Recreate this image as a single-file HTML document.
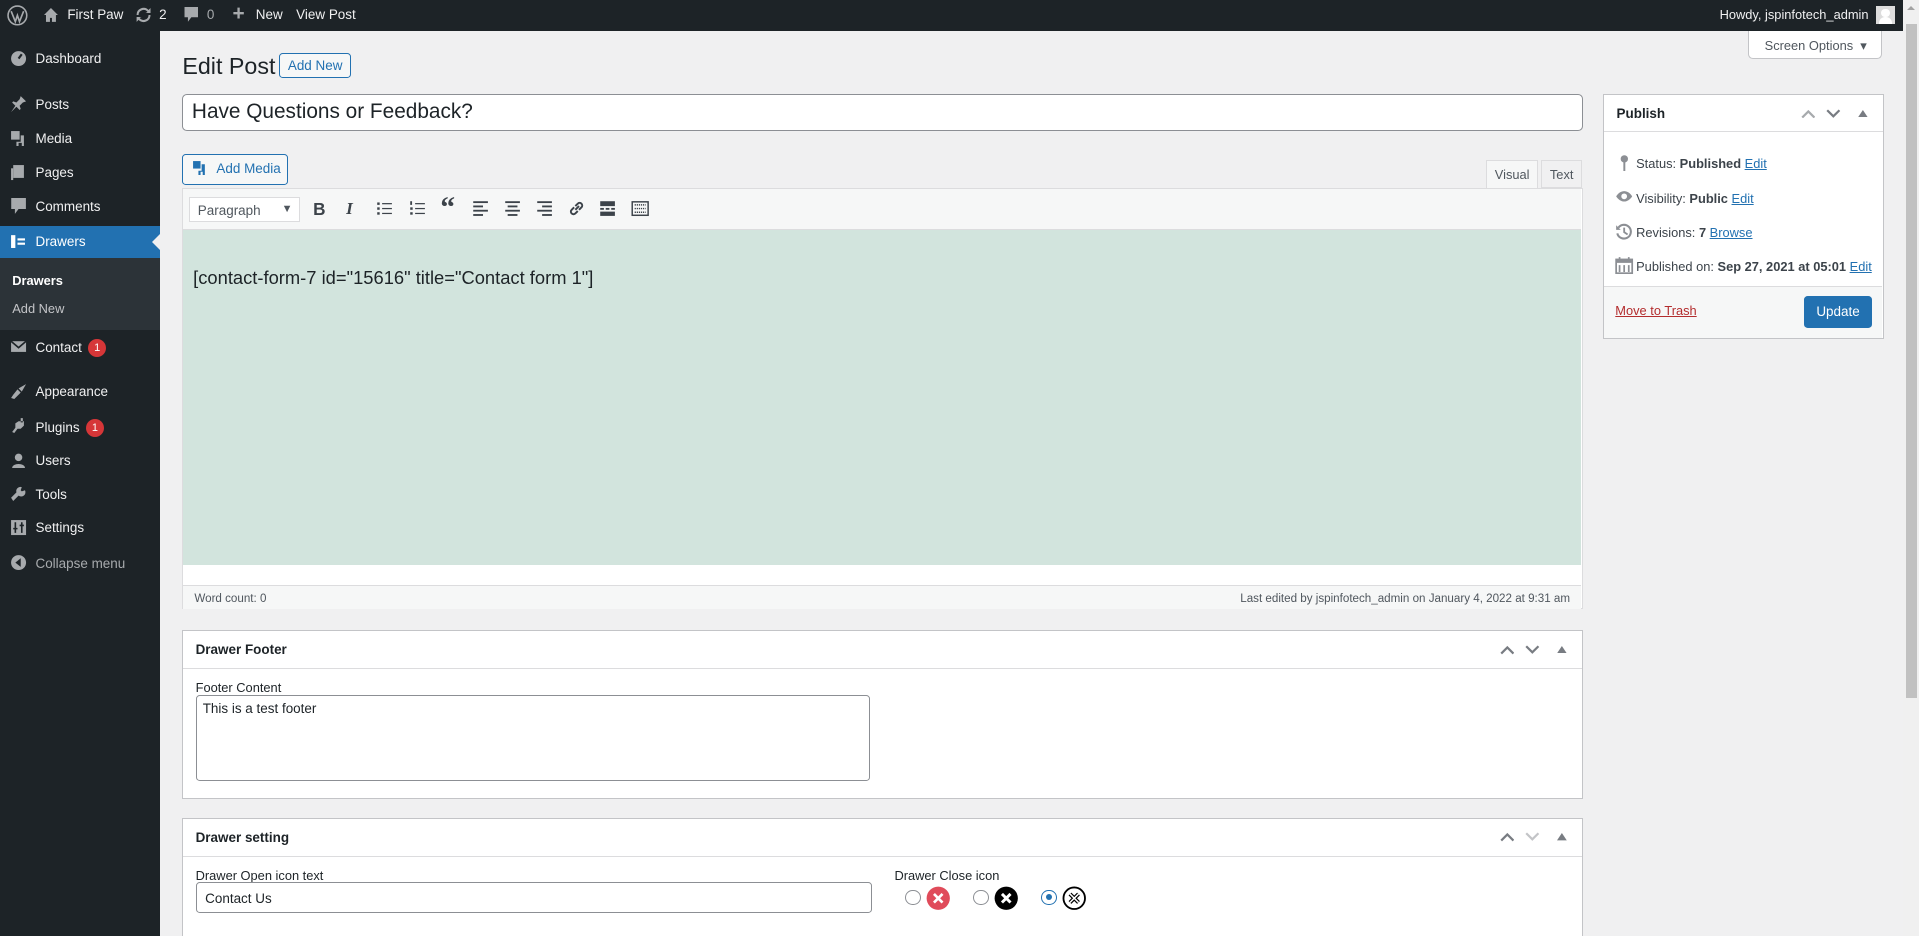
<!DOCTYPE html>
<html><head><meta charset="utf-8">
<style>
html{zoom:1.2239;background:#f0f0f1;overflow:hidden}
*{box-sizing:border-box;margin:0;padding:0}
body{width:1568px;height:765px;overflow:hidden;background:#f0f0f1;font-family:"Liberation Sans",sans-serif;font-size:11px;color:#1d2327;position:relative}
.abs{position:absolute}
#bar{left:0;top:0;width:1555px;height:25px;background:#1d2327;color:#f0f0f1;font-size:11px}
#bar span{position:absolute;top:6px}
#side{left:0;top:25px;width:131px;height:740px;background:#1d2327}
.mi{position:absolute;left:0;width:131px;height:26px;color:#f0f0f1;font-size:11px}
.mi .t{position:absolute;left:29px;top:6px}
.mi svg{position:absolute;left:8px;top:5px}
.badge{display:inline-block;background:#d63638;color:#fff;border-radius:8px;width:15px;height:15px;text-align:center;font-size:9px;line-height:15px;margin-left:5px;vertical-align:1px}
.box{position:absolute;background:#fff;border:1px solid #c3c4c7}
.hd{position:absolute;left:0;right:0;top:0;height:31px;border-bottom:1px solid #dcdcde;font-weight:bold;font-size:11px;padding:9px 10px}
.hd svg{position:absolute;top:11px}
a{color:#2271b1;text-decoration:underline}
.tb svg{position:absolute;top:9px}
</style></head><body>
<div id="bar" class="abs">
<svg class="abs" style="left:6px;top:4px" width="17" height="17" viewBox="0 0 20 20"><circle cx="10" cy="10" r="9" fill="none" stroke="#a7aaad" stroke-width="1.5"/><path d="M4 6l4 10 2-6 2 6 4-10" fill="none" stroke="#a7aaad" stroke-width="1.6"/></svg>
<svg class="abs" style="left:35px;top:6px" width="13" height="13" viewBox="0 0 16 16"><path d="M8 1L1 8h2v7h4v-4h2v4h4V8h2z" fill="#a7aaad"/></svg>
<span style="left:55px">First Paw</span>
<svg class="abs" style="left:110px;top:6px" width="14" height="13" viewBox="0 0 16 16"><path d="M3 8a5 5 0 0 1 9-3l-2 1h5V1l-2 2A7 7 0 0 0 1 8zM13 8a5 5 0 0 1-9 3l2-1H1v5l2-2a7 7 0 0 0 12-5z" fill="#a7aaad"/></svg>
<span style="left:130px">2</span>
<svg class="abs" style="left:150px;top:6px" width="12" height="13" viewBox="0 0 12 14"><path d="M0 0h12v9H6l-3 4V9H0z" fill="#a7aaad"/></svg>
<span style="left:169px;color:#a7aaad">0</span>
<span style="left:190px;top:2px;font-size:17px;font-weight:bold;color:#a7aaad">+</span>
<span style="left:209px">New</span>
<span style="left:242px">View Post</span>
<span style="left:1405px;font-size:10.5px">Howdy, jspinfotech_admin</span>
<div class="abs" style="left:1533px;top:5px;width:15px;height:15px;background:#ddd;overflow:hidden"><div class="abs" style="left:4px;top:2px;width:7px;height:7px;border-radius:50%;background:#fff"></div><div class="abs" style="left:2px;top:9px;width:11px;height:6px;border-radius:5px 5px 0 0;background:#fff"></div></div>
</div>
<div class="abs" style="left:1555px;top:0;width:13px;height:765px;background:#f0f0f0"><div class="abs" style="left:2px;top:20px;width:9px;height:550px;background:#c1c1c1"></div><div class="abs" style="left:3px;top:5px;border:3.5px solid transparent;border-bottom:4px solid #a3a3a3;border-top:0"></div></div>
<div id="side" class="abs">
<div class="mi" style="top:11px"><svg width="14" height="14" viewBox="0 0 16 16"><circle cx="8" cy="8" r="7" fill="#a7aaad"/><path d="M8 8l3-4" stroke="#1d2327" stroke-width="2"/></svg><span class="t">Dashboard</span></div>
<div class="mi" style="top:48px"><svg width="14" height="14" viewBox="0 0 16 16"><path d="M10 1l5 5-3 1-3 3 1 3-1 1-3-3-5 5 4-6-3-3 1-1 3 1 3-3z" fill="#a7aaad"/></svg><span class="t">Posts</span></div>
<div class="mi" style="top:76px"><svg width="14" height="14" viewBox="0 0 16 16"><rect x="1" y="1" width="8" height="8" fill="#a7aaad"/><path d="M10 5h3v10h-2v-3h-3v3H6v-4h4z" fill="#a7aaad"/></svg><span class="t">Media</span></div>
<div class="mi" style="top:104px"><svg width="14" height="14" viewBox="0 0 16 16"><rect x="3" y="1" width="10" height="12" fill="#a7aaad"/><rect x="1" y="4" width="2" height="11" fill="#a7aaad"/></svg><span class="t">Pages</span></div>
<div class="mi" style="top:132px"><svg width="14" height="14" viewBox="0 0 12 14"><path d="M0 0h12v9H6l-3 4V9H0z" fill="#a7aaad"/></svg><span class="t">Comments</span></div>
<div class="mi" style="top:160px;background:#2271b1;color:#fff"><svg width="14" height="14" viewBox="0 0 16 16"><rect x="1" y="2" width="4" height="12" fill="#fff"/><rect x="7" y="5" width="7" height="2" fill="#fff"/><rect x="7" y="9" width="7" height="2" fill="#fff"/></svg><span class="t">Drawers</span><div class="abs" style="right:0;top:6px;border:7px solid transparent;border-right:7px solid #f0f0f1;border-left:0"></div></div>
<div class="abs" style="left:0;top:186px;width:131px;height:59px;background:#2c3338"></div>
<div class="abs" style="left:10px;top:198px;color:#fff;font-weight:bold;font-size:10.5px">Drawers</div>
<div class="abs" style="left:10px;top:221px;color:#c3c4c7;font-size:10.5px">Add New</div>
<div class="mi" style="top:246px"><svg width="14" height="14" viewBox="0 0 16 16"><rect x="1" y="3" width="14" height="10" fill="#a7aaad"/><path d="M1 3l7 6 7-6" fill="none" stroke="#1d2327" stroke-width="1.5"/></svg><span class="t">Contact<span class="badge">1</span></span></div>
<div class="mi" style="top:283px"><svg width="14" height="14" viewBox="0 0 16 16"><path d="M15 1l-7 4 3 3zM7 6l3 3-4 4-2 2-3-1 2-3z" fill="#a7aaad"/></svg><span class="t">Appearance</span></div>
<div class="mi" style="top:311px"><svg width="14" height="14" viewBox="0 0 16 16"><path d="M10 1v4h2V1zM13 4v4l-3 3H7l-3 4-2-1 3-4V6l3-2z" fill="#a7aaad"/></svg><span class="t">Plugins<span class="badge">1</span></span></div>
<div class="mi" style="top:339px"><svg width="14" height="14" viewBox="0 0 16 16"><circle cx="8" cy="5" r="3.5" fill="#a7aaad"/><path d="M2 15c0-5 12-5 12 0z" fill="#a7aaad"/></svg><span class="t">Users</span></div>
<div class="mi" style="top:367px"><svg width="14" height="14" viewBox="0 0 16 16"><path d="M14 4l-3 1-1-1 1-3a4 4 0 0 0-5 5L1 11l2 3 5-5a4 4 0 0 0 6-5z" fill="#a7aaad"/></svg><span class="t">Tools</span></div>
<div class="mi" style="top:394px"><svg width="14" height="14" viewBox="0 0 16 16"><rect x="1" y="1" width="14" height="14" fill="#a7aaad"/><path d="M5 3v10M11 3v10M3 9h4M9 6h4" stroke="#1d2327" stroke-width="1.5"/></svg><span class="t">Settings</span></div>
<div class="mi" style="top:423px;color:#a7aaad"><svg width="14" height="14" viewBox="0 0 16 16"><circle cx="8" cy="8" r="7" fill="#a7aaad"/><path d="M10 4L5 8l5 4z" fill="#1d2327"/></svg><span class="t">Collapse menu</span></div>
</div>

<div class="abs" style="left:149px;top:43px;font-size:19px">Edit Post</div>
<div class="abs" style="left:228px;top:43px;width:59px;height:21px;border:1px solid #2271b1;border-radius:3px;color:#2271b1;font-size:11px;text-align:center;line-height:19px;background:#f6f7f7">Add New</div>
<div class="abs" style="left:1428px;top:25px;width:110px;height:23px;background:#fff;border:1px solid #c3c4c7;border-top:0;border-radius:0 0 4px 4px;color:#50575e;font-size:10.5px;padding:6px 0 0 13px">Screen Options &nbsp;▾</div>

<div class="abs" style="left:149px;top:77px;width:1144px;height:30px;background:#fff;border:1px solid #8c8f94;border-radius:4px;font-size:17px;padding:4px 7px">Have Questions or Feedback?</div>

<div class="abs" style="left:149px;top:126px;width:86px;height:25px;border:1px solid #2271b1;border-radius:3px;color:#2271b1;background:#f6f7f7;font-size:11px;padding:5px 0 0 27px"><svg class="abs" style="left:7px;top:4px" width="14" height="14" viewBox="0 0 16 16"><rect x="1" y="1" width="7" height="7" fill="#2271b1"/><path d="M9 4h3v10h-2v-3H8v3H6v-4h3z" fill="#2271b1"/></svg>Add Media</div>
<div class="abs" style="left:1214px;top:131px;width:43px;height:24px;background:#f6f7f7;border:1px solid #dcdcde;border-bottom:0;font-size:10.5px;color:#50575e;text-align:center;padding-top:5px">Visual</div>
<div class="abs" style="left:1259px;top:131px;width:34px;height:23px;background:#f0f0f1;border:1px solid #dcdcde;font-size:10.5px;color:#50575e;text-align:center;padding-top:5px">Text</div>

<div class="abs" style="left:149px;top:154px;width:1144px;height:344px;border:1px solid #dcdcde;background:#fff">
 <div class="abs tb" style="left:0;top:0;width:1142px;height:33px;background:#f6f7f7;border-bottom:1px solid #dcdcde">
  <div class="abs" style="left:5px;top:6px;width:90px;height:21px;background:#fff;border:1px solid #dcdcde;color:#50575e;font-size:11px;padding:4px 6px">Paragraph<span class="abs" style="right:5px;top:4px;font-size:9px">▼</span></div>
  <span class="abs" style="left:106px;top:8px;font-size:14px;font-weight:bold;color:#3c434a">B</span>
  <span class="abs" style="left:133px;top:8px;font-size:14px;font-style:italic;font-weight:bold;font-family:'Liberation Serif',serif;color:#3c434a">I</span>
  <svg style="left:157px" width="14" height="14" viewBox="0 0 14 14" fill="#3c434a"><rect x="1" y="2" width="2" height="2"/><rect x="1" y="6" width="2" height="2"/><rect x="1" y="10" width="2" height="2"/><rect x="5" y="2.5" width="8" height="1"/><rect x="5" y="6.5" width="8" height="1"/><rect x="5" y="10.5" width="8" height="1"/></svg>
  <svg style="left:184px" width="14" height="14" viewBox="0 0 14 14" fill="#3c434a"><rect x="1" y="1" width="1.5" height="3"/><rect x="1" y="6" width="2" height="2"/><rect x="1" y="10" width="2" height="2"/><rect x="5" y="2.5" width="8" height="1"/><rect x="5" y="6.5" width="8" height="1"/><rect x="5" y="10.5" width="8" height="1"/></svg>
  <span class="abs" style="left:210px;top:2px;font-size:24px;font-weight:bold;color:#3c434a;font-family:'Liberation Serif',serif">“</span>
  <svg style="left:236px" width="14" height="14" viewBox="0 0 14 14" fill="#3c434a"><rect x="1" y="1" width="12" height="1.5"/><rect x="1" y="4.5" width="8" height="1.5"/><rect x="1" y="8" width="12" height="1.5"/><rect x="1" y="11.5" width="8" height="1.5"/></svg>
  <svg style="left:262px" width="14" height="14" viewBox="0 0 14 14" fill="#3c434a"><rect x="1" y="1" width="12" height="1.5"/><rect x="3" y="4.5" width="8" height="1.5"/><rect x="1" y="8" width="12" height="1.5"/><rect x="3" y="11.5" width="8" height="1.5"/></svg>
  <svg style="left:288px" width="14" height="14" viewBox="0 0 14 14" fill="#3c434a"><rect x="1" y="1" width="12" height="1.5"/><rect x="5" y="4.5" width="8" height="1.5"/><rect x="1" y="8" width="12" height="1.5"/><rect x="5" y="11.5" width="8" height="1.5"/></svg>
  <svg style="left:314px" width="14" height="14" viewBox="0 0 14 14"><path d="M6 8l3-3M5 6l-2 2a2 2 0 0 0 3 3l2-2M9 8l2-2a2 2 0 0 0-3-3L6 5" fill="none" stroke="#3c434a" stroke-width="1.6"/></svg>
  <svg style="left:340px" width="14" height="14" viewBox="0 0 14 14" fill="#3c434a"><rect x="1" y="1" width="12" height="4"/><rect x="1" y="6.5" width="3" height="1.5"/><rect x="5.5" y="6.5" width="3" height="1.5"/><rect x="10" y="6.5" width="3" height="1.5"/><rect x="1" y="9.5" width="12" height="3.5"/></svg>
  <svg style="left:366px" width="15" height="14" viewBox="0 0 15 14"><rect x="1" y="1.5" width="13" height="11" fill="none" stroke="#3c434a" stroke-width="1.2"/><path d="M3 4h9M3 7h9M3 10h9" stroke="#3c434a" stroke-width="1.2" stroke-dasharray="1 .7"/></svg>
 </div>
 <div class="abs" style="left:0;top:33px;width:1142px;height:274px;background:#d2e4dd;font-size:15px;padding:30px 8px">[contact-form-7 id="15616" title="Contact form 1"]</div>
 <div class="abs" style="left:0;top:323px;width:1142px;height:20px;background:#f6f7f7;border-top:1px solid #dcdcde;font-size:9.5px;color:#50575e;padding:5px 9px">Word count: 0<span class="abs" style="right:9px;top:5px">Last edited by jspinfotech_admin on January 4, 2022 at 9:31 am</span></div>
</div>

<div class="box" style="left:149px;top:515px;width:1144px;height:138px">
 <div class="hd">Drawer Footer
  <svg style="right:55px" width="12" height="8" viewBox="0 0 12 8"><path d="M1 7l5-5 5 5" fill="none" stroke="#787c82" stroke-width="1.8"/></svg>
  <svg style="right:34px" width="12" height="8" viewBox="0 0 12 8"><path d="M1 1l5 5 5-5" fill="none" stroke="#787c82" stroke-width="1.8"/></svg>
  <svg style="right:12px;top:12px" width="8" height="6" viewBox="0 0 8 6"><path d="M0 6L4 0l4 6z" fill="#787c82"/></svg></div>
 <div class="abs" style="left:10px;top:40px;font-size:10.5px">Footer Content</div>
 <div class="abs" style="left:10px;top:52px;width:551px;height:70px;border:1px solid #8c8f94;border-radius:3px;font-size:11px;padding:4px 5px">This is a test footer</div>
</div>

<div class="box" style="left:149px;top:668px;width:1144px;height:97px;border-bottom:0">
 <div class="hd">Drawer setting
  <svg style="right:55px" width="12" height="8" viewBox="0 0 12 8"><path d="M1 7l5-5 5 5" fill="none" stroke="#787c82" stroke-width="1.8"/></svg>
  <svg style="right:34px" width="12" height="8" viewBox="0 0 12 8"><path d="M1 1l5 5 5-5" fill="none" stroke="#c3c4c7" stroke-width="1.8"/></svg>
  <svg style="right:12px;top:12px" width="8" height="6" viewBox="0 0 8 6"><path d="M0 6L4 0l4 6z" fill="#787c82"/></svg></div>
 <div class="abs" style="left:10px;top:40px;font-size:10.5px">Drawer Open icon text</div>
 <div class="abs" style="left:10px;top:52px;width:553px;height:25px;border:1px solid #8c8f94;border-radius:3px;font-size:11px;padding:6px 7px">Contact Us</div>
 <div class="abs" style="left:581px;top:40px;font-size:10.5px">Drawer Close icon</div>
 <div class="abs" style="left:590px;top:58px;width:13px;height:13px;border:1px solid #8c8f94;border-radius:50%;background:#fff"></div>
 <svg class="abs" style="left:607px;top:55px" width="20" height="20" viewBox="0 0 20 20"><circle cx="10" cy="10" r="9.5" fill="#e04b5a"/><path d="M6.5 6.5l7 7M13.5 6.5l-7 7" stroke="#fff" stroke-width="2.2"/></svg>
 <div class="abs" style="left:645px;top:58px;width:13px;height:13px;border:1px solid #8c8f94;border-radius:50%;background:#fff"></div>
 <svg class="abs" style="left:662px;top:55px" width="20" height="20" viewBox="0 0 20 20"><circle cx="10" cy="10" r="9.5" fill="#000"/><path d="M6.5 6.5l7 7M13.5 6.5l-7 7" stroke="#fff" stroke-width="2.4"/></svg>
 <div class="abs" style="left:701px;top:58px;width:13px;height:13px;border:1px solid #2271b1;border-radius:50%;background:#fff"><div class="abs" style="left:3px;top:3px;width:5px;height:5px;border-radius:50%;background:#2271b1"></div></div>
 <svg class="abs" style="left:718px;top:55px" width="20" height="20" viewBox="0 0 20 20"><circle cx="10" cy="10" r="8.8" fill="#fff" stroke="#000" stroke-width="1.5"/><path d="M6.5 6.5l7 7M13.5 6.5l-7 7" stroke="#000" stroke-width="3.2"/><path d="M6.5 6.5l7 7M13.5 6.5l-7 7" stroke="#fff" stroke-width="1.2"/></svg>
</div>

<div class="box" style="left:1310px;top:77px;width:229px;height:200px">
 <div class="hd" style="height:30px">Publish
  <svg style="right:55px" width="12" height="8" viewBox="0 0 12 8"><path d="M1 7l5-5 5 5" fill="none" stroke="#a7aaad" stroke-width="1.8"/></svg>
  <svg style="right:34px" width="12" height="8" viewBox="0 0 12 8"><path d="M1 1l5 5 5-5" fill="none" stroke="#787c82" stroke-width="1.8"/></svg>
  <svg style="right:12px;top:12px" width="8" height="6" viewBox="0 0 8 6"><path d="M0 6L4 0l4 6z" fill="#787c82"/></svg></div>
 <svg class="abs" style="left:10px;top:48px" width="12" height="14" viewBox="0 0 12 14"><circle cx="6" cy="4" r="3" fill="#8c8f94"/><rect x="5.2" y="6" width="1.6" height="8" fill="#8c8f94"/></svg>
 <div class="abs" style="left:26px;top:50px;font-size:10.5px;color:#3c434a">Status: <b>Published</b> <a>Edit</a></div>
 <svg class="abs" style="left:9px;top:77px" width="15" height="12" viewBox="0 0 16 12"><path d="M1 6c4-6 10-6 14 0-4 6-10 6-14 0z" fill="#8c8f94"/><circle cx="8" cy="6" r="2.5" fill="#fff"/></svg>
 <div class="abs" style="left:26px;top:78px;font-size:10.5px;color:#3c434a">Visibility: <b>Public</b> <a>Edit</a></div>
 <svg class="abs" style="left:9px;top:104px" width="15" height="15" viewBox="0 0 16 16"><path d="M3 4a6 6 0 1 1-1 5" fill="none" stroke="#8c8f94" stroke-width="1.8"/><path d="M1 2v4h4z" fill="#8c8f94"/><path d="M8 4v4l3 2" fill="none" stroke="#8c8f94" stroke-width="1.6"/></svg>
 <div class="abs" style="left:26px;top:106px;font-size:10.5px;color:#3c434a">Revisions: <b>7</b> <a>Browse</a></div>
 <svg class="abs" style="left:9px;top:131px" width="15" height="15" viewBox="0 0 16 16"><rect x="1" y="3" width="14" height="12" fill="none" stroke="#8c8f94" stroke-width="1.5"/><rect x="1" y="3" width="14" height="3" fill="#8c8f94"/><path d="M4 8v6M8 8v6M12 8v6" stroke="#8c8f94" stroke-width="1.5"/><path d="M4 1v3M12 1v3" stroke="#8c8f94" stroke-width="1.5"/></svg>
 <div class="abs" style="left:26px;top:134px;font-size:10.5px;color:#3c434a">Published on: <b>Sep 27, 2021 at 05:01</b> <a>Edit</a></div>
 <div class="abs" style="left:0;top:156px;width:227px;height:42px;background:#f6f7f7;border-top:1px solid #dcdcde">
  <a class="abs" style="left:9px;top:13px;font-size:10.5px;color:#b32d2e">Move to Trash</a>
  <div class="abs" style="left:163px;top:7px;width:56px;height:26px;background:#2271b1;border-radius:3px;color:#fff;font-size:11px;text-align:center;line-height:26px">Update</div>
 </div>
</div>
</body></html>
